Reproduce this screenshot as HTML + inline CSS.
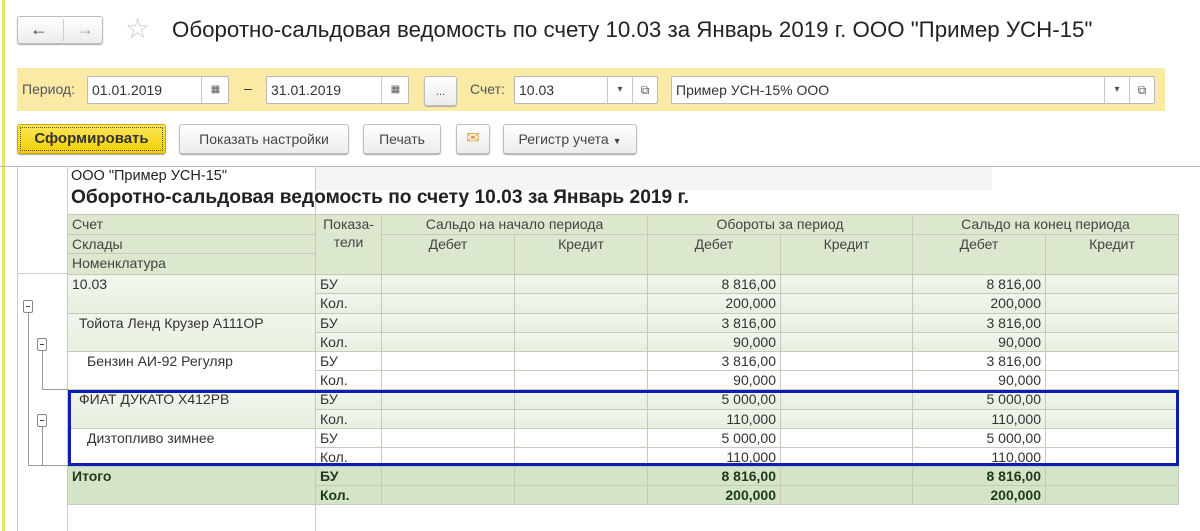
<!DOCTYPE html>
<html><head><meta charset="utf-8"><style>
*{box-sizing:border-box;margin:0;padding:0}
body{width:1200px;height:531px;overflow:hidden;background:#fff;font-family:"Liberation Sans",Arial,sans-serif;color:#333;position:relative;font-size:13px}
.a{position:absolute}
.btn{position:absolute;border:1px solid #bdbdbd;border-radius:3px;background:linear-gradient(#fff,#ececec);box-shadow:0 1px 1px #aaa;text-align:center;font-size:14px;color:#444;line-height:28px}
.inp{position:absolute;background:#fff;border:1px solid #b9b9b9;border-radius:2px;height:28px;font-size:14px;line-height:26px;padding-left:4px;color:#333}
.sub{position:absolute;top:0;height:26px;border-left:1px solid #c9c9c9;text-align:center;font-size:10px;color:#555}
table{border-collapse:collapse;table-layout:fixed;position:absolute;left:67px;top:214px}
td{border:1px solid #c3cbbd;height:19.2px;padding:0 4px;font-size:14px;white-space:nowrap;overflow:hidden;vertical-align:top;line-height:18px}
.h td{background:#dbe8ce;text-align:center;color:#444;height:19.6px}
.g td{background:linear-gradient(#f2f6ee,#e6efdf)}
.w td{background:#fff}
.t td{background:#d5e3c6;font-weight:bold;color:#1d3a1d}
.r{text-align:right}
.mn{position:absolute;width:10px;height:13px;border:1px solid #888;background:#fff;border-radius:2px}
.mn:after{content:"";position:absolute;left:2px;top:5px;width:4px;height:1px;background:#444}
</style></head><body>
<div class="a" style="left:2px;top:0;width:3px;height:531px;background:#f0e070"></div>
<div class="btn" style="left:17px;top:16px;width:86px;height:28px;line-height:24px;font-size:18px"><span style="position:absolute;left:12px;color:#444">&#8592;</span><span style="position:absolute;left:45px;top:2px;width:1px;height:22px;background:#ccc"></span><span style="position:absolute;left:58px;color:#aaa">&#8594;</span></div>
<div class="a" style="left:125px;top:13px;font-size:28px;color:#c8c8c8;line-height:32px">&#9734;</div>
<div class="a" style="left:172px;top:17px;font-size:22.3px;color:#222;white-space:nowrap">Оборотно-сальдовая ведомость по счету 10.03 за Январь 2019 г. ООО "Пример УСН-15"</div>
<div class="a" style="left:17px;top:68px;width:1148px;height:43px;background:#faeaa6"></div>
<div class="a" style="left:22px;top:81px;font-size:14px;color:#555">Период:</div>
<div class="inp" style="left:87px;top:76px;width:142px">01.01.2019<div class="sub" style="left:113px;width:28px;line-height:26px">&#9638;</div></div>
<div class="a" style="left:244px;top:80px;font-size:14px">–</div>
<div class="inp" style="left:266px;top:76px;width:143px">31.01.2019<div class="sub" style="left:114px;width:28px;line-height:26px">&#9638;</div></div>
<div class="btn" style="left:424px;top:76px;width:33px;height:30px;font-size:11px;line-height:30px">...</div>
<div class="a" style="left:470px;top:81px;font-size:14px;color:#555">Счет:</div>
<div class="inp" style="left:514px;top:76px;width:144px">10.03<div class="sub" style="left:92px;width:25px;line-height:26px">&#9662;</div><div class="sub" style="left:117px;width:25px;line-height:26px;font-size:12px">&#10697;</div></div>
<div class="inp" style="left:671px;top:76px;width:484px">Пример УСН-15% ООО<div class="sub" style="left:432px;width:25px;line-height:26px">&#9662;</div><div class="sub" style="left:457px;width:25px;line-height:26px;font-size:12px">&#10697;</div></div>
<div class="btn" style="left:17px;top:124px;width:149px;height:30px;background:linear-gradient(#fbe65a,#f0d000);border-color:#c9a800;font-weight:bold;color:#333;font-size:15px;outline:1px dotted #665500;outline-offset:-4px">Сформировать</div>
<div class="btn" style="left:179px;top:124px;width:170px;height:30px">Показать настройки</div>
<div class="btn" style="left:363px;top:124px;width:78px;height:30px">Печать</div>
<div class="btn" style="left:456px;top:124px;width:34px;height:30px;color:#e0a030;font-size:16px">&#9993;</div>
<div class="btn" style="left:503px;top:124px;width:134px;height:30px">Регистр учета <span style="font-size:9px">&#9660;</span></div>
<div class="a" style="left:0;top:166px;width:1200px;height:1px;background:#bbb"></div>
<div class="a" style="left:17px;top:166px;width:1px;height:365px;background:#ccc"></div>
<div class="a" style="left:67px;top:166px;width:1px;height:365px;background:#ccc"></div>
<div class="a" style="left:315px;top:166px;width:1px;height:365px;background:#ccc"></div>
<div class="a" style="left:316px;top:167px;width:676px;height:23px;background:#f5f5f5"></div>
<div class="a" style="left:17px;top:273px;width:50px;height:1px;background:#ccc"></div>
<div class="a" style="left:71px;top:168px;font-size:14.5px;color:#222">ООО "Пример УСН-15"</div>
<div class="a" style="left:71px;top:187px;font-size:19.2px;font-weight:bold;color:#222;white-space:nowrap">Оборотно-сальдовая ведомость по счету 10.03 за Январь 2019 г.</div>
<table>
<colgroup><col style="width:248px"><col style="width:66px"><col style="width:133px"><col style="width:133px"><col style="width:133px"><col style="width:132px"><col style="width:133px"><col style="width:133px"></colgroup>
<tr class="h"><td style="text-align:left">Счет</td><td rowspan="3">Показа-<br>тели</td><td colspan="2">Сальдо на начало периода</td><td colspan="2">Обороты за период</td><td colspan="2">Сальдо на конец периода</td></tr>
<tr class="h"><td style="text-align:left">Склады</td><td rowspan="2">Дебет</td><td rowspan="2">Кредит</td><td rowspan="2">Дебет</td><td rowspan="2">Кредит</td><td rowspan="2">Дебет</td><td rowspan="2">Кредит</td></tr>
<tr class="h"><td style="text-align:left;height:21px">Номенклатура</td></tr>
<tr class="g"><td rowspan="2">10.03</td><td>БУ</td><td></td><td></td><td class="r">8 816,00</td><td></td><td class="r">8 816,00</td><td></td></tr>
<tr class="g"><td>Кол.</td><td></td><td></td><td class="r">200,000</td><td></td><td class="r">200,000</td><td></td></tr>
<tr class="g"><td rowspan="2" style="padding-left:11px">Тойота Ленд Крузер А111ОР</td><td>БУ</td><td></td><td></td><td class="r">3 816,00</td><td></td><td class="r">3 816,00</td><td></td></tr>
<tr class="g"><td>Кол.</td><td></td><td></td><td class="r">90,000</td><td></td><td class="r">90,000</td><td></td></tr>
<tr class="w"><td rowspan="2" style="padding-left:19px">Бензин АИ-92 Регуляр</td><td>БУ</td><td></td><td></td><td class="r">3 816,00</td><td></td><td class="r">3 816,00</td><td></td></tr>
<tr class="w"><td>Кол.</td><td></td><td></td><td class="r">90,000</td><td></td><td class="r">90,000</td><td></td></tr>
<tr class="g"><td rowspan="2" style="padding-left:11px">ФИАТ ДУКАТО Х412РВ</td><td>БУ</td><td></td><td></td><td class="r">5 000,00</td><td></td><td class="r">5 000,00</td><td></td></tr>
<tr class="g"><td>Кол.</td><td></td><td></td><td class="r">110,000</td><td></td><td class="r">110,000</td><td></td></tr>
<tr class="w"><td rowspan="2" style="padding-left:19px">Дизтопливо зимнее</td><td>БУ</td><td></td><td></td><td class="r">5 000,00</td><td></td><td class="r">5 000,00</td><td></td></tr>
<tr class="w"><td>Кол.</td><td></td><td></td><td class="r">110,000</td><td></td><td class="r">110,000</td><td></td></tr>
<tr class="t"><td rowspan="2">Итого</td><td>БУ</td><td></td><td></td><td class="r">8 816,00</td><td></td><td class="r">8 816,00</td><td></td></tr>
<tr class="t"><td>Кол.</td><td></td><td></td><td class="r">200,000</td><td></td><td class="r">200,000</td><td></td></tr>
</table>
<div class="a" style="left:68px;top:390px;width:1111px;height:76px;border:3px solid #0b1fb5"></div>
<div class="a" style="left:28px;top:312px;width:1px;height:154px;background:#999"></div>
<div class="a" style="left:28px;top:465px;width:40px;height:1px;background:#999"></div>
<div class="a" style="left:42px;top:350px;width:1px;height:39px;background:#999"></div>
<div class="a" style="left:42px;top:389px;width:26px;height:1px;background:#999"></div>
<div class="a" style="left:42px;top:426px;width:1px;height:40px;background:#999"></div>
<div class="mn" style="left:23px;top:300px"></div>
<div class="mn" style="left:37px;top:338px"></div>
<div class="mn" style="left:37px;top:414px"></div>
</body></html>
